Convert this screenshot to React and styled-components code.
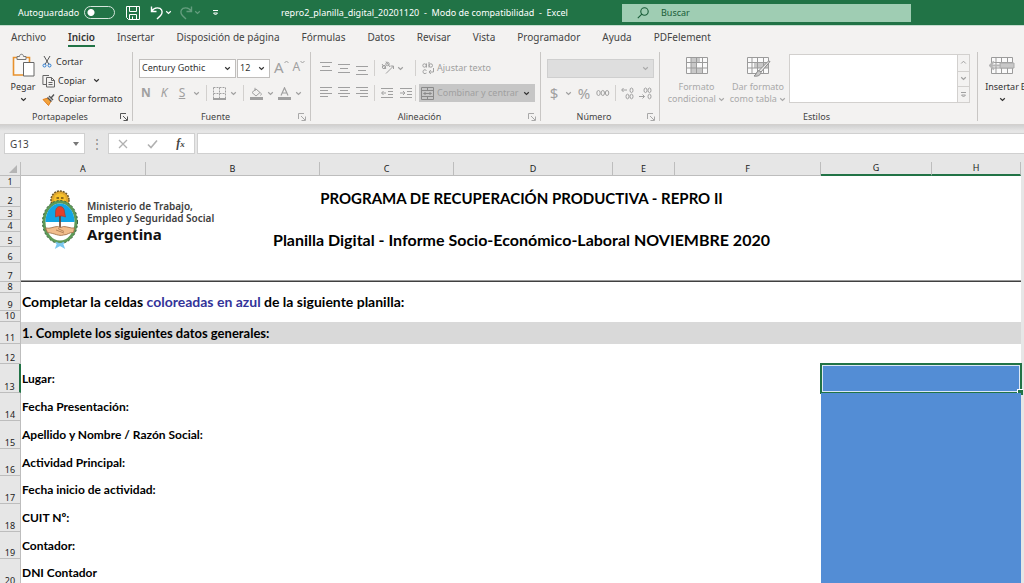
import React from "react";
import styled, { createGlobalStyle, css } from "styled-components";

const GlobalStyle = createGlobalStyle`
  * {
    box-sizing: border-box;
  }
  body {
    margin: 0;
    overflow: hidden;
    background: #e6e6e6;
    font-family: "Segoe UI", "Noto Sans", "Open Sans", sans-serif;
    font-size: 9px;
    line-height: 14px;
    color: #444;
  }
  button, input, select {
    font: inherit;
    color: inherit;
    margin: 0;
    padding: 0;
    border: 0;
    background: none;
    border-radius: 0;
    outline: none;
  }
`;

const Window = styled.div`
  display: flex;
  flex-direction: column;
  height: 100vh;
  overflow: hidden;
`;

/* ---------- title bar ---------- */

const TitleBar = styled.header`
  display: flex;
  align-items: center;
  height: 25px;
  flex: none;
  padding-left: 18px;
  background: #217346;
  color: #fff;
`;

const AutoSave = styled.label`
  display: flex;
  align-items: center;
  gap: 5px;
  width: 108px;
  white-space: nowrap;
`;

const Toggle = styled.input`
  appearance: none;
  width: 31px;
  height: 13px;
  margin: 0;
  border: 1px solid #d5e6dc;
  border-radius: 7px;
  background: radial-gradient(circle at 6px 50%, #fff 3px, transparent 4px);
`;

const QuickAccess = styled.div`
  display: flex;
  align-items: center;
  gap: 3px;
  width: 155px;
`;

const QuickButton = styled.button`
  display: flex;
  align-items: center;
  opacity: ${(p) => (p.disabled ? 0.3 : 1)};
  margin-right: ${(p) => p.$after || 0}px;
`;

const FileName = styled.div`
  width: 341px;
  white-space: pre;
`;

const Search = styled.label`
  display: flex;
  align-items: center;
  gap: 12px;
  flex: 0 1 289px;
  height: 18px;
  padding-left: 15px;
  background: #9fcdb3;
  color: #185c37;

  input {
    flex: 1;
    min-width: 0;
  }
  input::placeholder {
    color: #185c37;
    opacity: 1;
  }
`;

/* ---------- tabs ---------- */

const Tabs = styled.nav`
  display: flex;
  gap: 22px;
  flex: none;
  height: 26px;
  padding: 3px 0 0 11px;
  border-top: 1px solid #c5dccf;
  background: #f3f2f1;
  font-size: 10px;
  line-height: 16px;
`;

const Tab = styled.a`
  height: 18px;
  color: ${(p) => (p.$active ? "#333" : "#444")};
  font-weight: ${(p) => (p.$active ? 600 : 400)};
  border-bottom: 2px solid ${(p) => (p.$active ? "#217346" : "transparent")};
  text-decoration: none;
  white-space: nowrap;
`;

/* ---------- ribbon ---------- */

const Ribbon = styled.section`
  display: flex;
  flex: none;
  height: 74px;
  padding: 1px 0 3px;
  background: #f3f2f1;
  border-bottom: 1px solid #d2d0ce;
`;

const Group = styled.section`
  display: flex;
  flex-direction: column;
  justify-content: space-between;
  flex: ${(p) => (p.$width ? `0 0 ${p.$width}px` : "1 0 auto")};
  border-right: 1px solid #c8c6c4;
`;

const GroupBody = styled.div`
  display: flex;
  height: 56px;
  padding-left: ${(p) => p.$pad || 0}px;
  gap: ${(p) => p.$gap || 0}px;
`;

const GroupFooter = styled.footer`
  display: flex;
  align-items: center;
  height: 8px;
  padding: 0 4px 0 0;

  span {
    flex: 1;
    text-align: center;
  }
`;

const Launcher = styled.button`
  display: flex;
  color: ${(p) => (p.$dim ? "#a8a8a8" : "#555")};
`;

const Stack = styled.div`
  display: flex;
  flex-direction: column;
  gap: ${(p) => p.$gap || 0}px;
  padding-top: ${(p) => p.$top || 0}px;
`;

const Row = styled.div`
  display: flex;
  align-items: center;
  height: ${(p) => p.$height || 20}px;
  gap: ${(p) => p.$gap || 0}px;
`;

const ToolButton = styled.button`
  display: flex;
  align-items: center;
  gap: ${(p) => p.$gap || 2}px;
  height: 18px;
  color: ${(p) => (p.disabled ? "#a0a0a0" : "#333")};
  white-space: nowrap;
`;

const BigButton = styled.button`
  display: flex;
  flex-direction: column;
  align-items: center;
  width: ${(p) => p.$width}px;
  padding-top: ${(p) => p.$top || 3}px;
  line-height: 12px;
  color: ${(p) => (p.disabled ? "#a9a9a9" : "#333")};
  white-space: nowrap;

  > svg:first-child {
    margin-bottom: 4px;
  }
  > svg:last-child {
    margin-top: 4px;
  }
`;

const Letter = styled.span`
  width: 14px;
  font-size: ${(p) => p.$size || 12}px;
  text-align: center;
  ${(p) => p.$kind === "bold" && css`font-weight: 700;`}
  ${(p) => p.$kind === "italic" && css`font-style: italic;`}
  ${(p) => p.$kind === "underline" && css`text-decoration: underline;`}
`;

const SizeButton = styled.button`
  display: flex;
  align-items: flex-start;
  height: 16px;
  padding-left: 3px;
  color: #a0a0a0;
  font-size: ${(p) => p.$size}px;
`;

const Divider = styled.i`
  width: 1px;
  height: 16px;
  margin: 0 ${(p) => p.$space || 0}px;
  background: #d2d0ce;
`;

const SelectBox = styled.div`
  display: flex;
  align-items: center;
  width: ${(p) => p.$width}px;
  height: 19px;
  padding-right: 4px;
  border: 1px solid ${(p) => (p.$dim ? "#cfcfcf" : "#c0bebc")};
  background: ${(p) => (p.$dim ? "#dedede" : "#fff")};
  color: ${(p) => (p.$dim ? "#aaa" : "#333")};

  select {
    appearance: none;
    flex: 1;
    min-width: 0;
    padding-left: 2px;
  }
`;

const MergeButton = styled.button`
  display: flex;
  align-items: center;
  gap: 3px;
  width: 116px;
  height: 18px;
  padding: 0 5px 0 2px;
  background: #c6c6c6;
  color: #a0a0a0;
  white-space: nowrap;

  > svg:last-child {
    margin-left: auto;
  }
`;

const Gallery = styled.div`
  display: flex;
  width: 181px;
  height: 49px;
  margin-top: 2px;
  border: 1px solid #d2d0ce;
  background: #fff;
`;

const GalleryButtons = styled.div`
  display: grid;
  grid-template-rows: repeat(3, 1fr);
  width: 12px;
  margin-left: auto;
  background: #f3f2f1;
  border-left: 1px solid #d2d0ce;

  button {
    display: flex;
    align-items: center;
    justify-content: center;
    color: #a0a0a0;
  }
  button + button {
    border-top: 1px solid #d2d0ce;
  }
`;

/* ---------- formula bar ---------- */

const FormulaBar = styled.div`
  display: flex;
  align-items: center;
  flex: none;
  height: 37px;
  padding: 8px 0 8px 4px;
  background: linear-gradient(#d0d0d0, #e6e6e6 6px);
`;

const NameBox = styled.div`
  display: flex;
  align-items: center;
  width: 81px;
  height: 21px;
  padding: 0 5px;
  border: 1px solid #d0d0d0;
  background: #fff;
  font-size: 10px;

  input {
    flex: 1;
    min-width: 0;
  }
`;

const Dots = styled.div`
  width: 23px;
  text-align: center;
  font-size: 12px;
  color: #888;
`;

const FormulaActions = styled.div`
  display: flex;
  align-items: center;
  justify-content: space-around;
  width: 87px;
  height: 21px;
  margin-right: 2px;
  border: 1px solid #d0d0d0;
  background: #fff;

  button {
    display: flex;
    color: #b0b0b0;
  }
`;

const FxLabel = styled.span`
  color: #444;
  font: italic 700 12px "Liberation Serif", serif;

  small {
    font-size: 9px;
  }
`;

const FormulaInput = styled.input`
  flex: 1;
  min-width: 0;
  height: 21px;
  border: 1px solid #d0d0d0;
  border-right: 0;
  background: #fff;
`;

/* ---------- sheet ---------- */

const SheetArea = styled.main`
  position: relative;
  flex: 1;
  min-height: 0;
  padding-right: 3px;
  overflow: hidden;
`;

const Sheet = styled.table`
  width: 100%;
  table-layout: fixed;
  border-collapse: separate;
  border-spacing: 0;
  color: #000;
`;

const Col = styled.col`
  width: ${(p) => (p.$width ? `${p.$width}px` : "auto")};
`;

const ColHead = styled.th`
  height: 14px;
  padding: 0;
  background: #e6e6e6;
  border-right: 1px solid #bdbdbd;
  border-bottom: ${(p) => (p.$selected ? "2px solid #217346" : "1px solid #bdbdbd")};
  color: #222;
  font-size: 9px;
  font-weight: 400;
  line-height: 12px;
  vertical-align: bottom;
`;

const Corner = styled.td`
  padding: 0;
  border-right: 1px solid #bdbdbd;
  border-bottom: 1px solid #bdbdbd;

  svg {
    display: block;
    margin-left: auto;
    margin-right: 3px;
  }
`;

const RowHead = styled.th`
  height: ${(p) => p.$height}px;
  padding: 0;
  vertical-align: bottom;
  background: #e6e6e6;
  border-right: ${(p) => (p.$selected ? "2px solid #217346" : "1px solid #bdbdbd")};
  border-bottom: 1px solid #bdbdbd;
  color: #222;
  font-size: 9px;
  font-weight: 400;
  line-height: 10px;
`;

const Cell = styled.td`
  padding: 0 0 0 1px;
  background: #fff;
  font-family: "Century Gothic", Lato, sans-serif;
  font-weight: 700;
  font-size: 12px;
  line-height: 10px;
  white-space: nowrap;
  ${(p) => p.$kind === "title" && css`
    font-size: 15px;
    text-align: center;
  `}
  ${(p) => p.$kind === "subtitle" && css`
    font-size: 16px;
    text-align: center;
  `}
  ${(p) => p.$kind === "note" && css`font-size: 14px;`}
  ${(p) => p.$kind === "section" && css`
    font-size: 13px;
    background: #d9d9d9;
  `}
  ${(p) => p.$kind === "rule" && css`
    border-bottom: 1px solid #404040;
    background: linear-gradient(#fff calc(100% - 1px), #9a9a9a 0);
    background-origin: padding-box;
    background-clip: padding-box;
  `}
`;

const InputCell = styled.td`
  position: relative;
  padding: 0;
  background: #538dd5;
`;

const Selection = styled.div`
  position: absolute;
  inset: -1px;
  border: 2px solid #217346;
  box-shadow: inset 0 0 0 1px #dce8f6;

  &::after {
    content: "";
    position: absolute;
    right: -3px;
    bottom: -3px;
    width: 5px;
    height: 5px;
    border: 1px solid #fff;
    border-width: 1px 0 0 1px;
    background: #217346;
  }
`;

const Blue = styled.span`
  color: #333399;
`;

/* the ministry logo floats over the cells */
const Logo = styled.div`
  position: absolute;
  left: 41px;
  top: 27px;
  display: flex;
  gap: 8px;
  white-space: nowrap;
`;

const LogoText = styled.div`
  padding-top: 11px;
  color: #404040;
  font-weight: 600;
  font-size: 10px;
  line-height: 12px;

  strong {
    display: block;
    color: #111;
    font-size: 15px;
    font-weight: 700;
    line-height: 20px;
  }
`;

/* ---------- drawings ---------- */

const Svg = ({ w = 14, h = w, children, ...rest }) => (
  <svg width={w} height={h} viewBox={`0 0 ${w} ${h}`} fill="none" stroke="currentColor" aria-hidden="true" {...rest}>
    {children}
  </svg>
);

const Chevron = () => (
  <Svg w={7} h={5} strokeWidth="1.2">
    <path d="M1.2 1.2 3.5 3.4 5.8 1.2" />
  </Svg>
);

const SaveIcon = () => (
  <Svg w={14}>
    <path d="M.500.500h13v13H2.500l-2-2zM3.500.500v5h7v-5M3.500 13.500v-5h7v5M6.500 10.500v3" />
  </Svg>
);

const UndoIcon = () => (
  <Svg w={16} strokeWidth="1.4">
    <path d="M2.500 1.500v5h5M2.700 6.200C4.500 3.500 8 2 11 3.400c2.800 1.600 2.600 5 .6 7L8 14" />
  </Svg>
);

const RedoIcon = () => (
  <Svg w={16} strokeWidth="1.4">
    <path d="M13.500 1.500v5h-5M13.300 6.200C11.500 3.500 8 2 5 3.400c-2.800 1.600-2.600 5-.6 7L8 14" />
  </Svg>
);

const CustomizeIcon = () => (
  <Svg w={7} h={8}>
    <path d="M1 1.500h5" />
    <path d="M1.500 4h4L3.500 6z" />
  </Svg>
);

const SearchIcon = () => (
  <Svg w={12} strokeWidth="1.1">
    <circle cx="7.500" cy="4.500" r="3.700" />
    <path d="M4.800 7.200.8 11.200" />
  </Svg>
);

const LauncherIcon = () => (
  <Svg w={8}>
    <path d="M.500 6V.500H6M3 3l4 4M7.500 3.500v4h-4" />
  </Svg>
);

const PasteIcon = () => (
  <Svg w={24} h={24}>
    <path d="M2.500 4.500h16v17.500h-16z" fill="#faf9f8" stroke="#e8912d" strokeWidth="1.600" />
    <path d="M6 6.500v-3h2.500c0-3 4-3 4 0H15v3z" fill="#f3f2f1" stroke="#777" />
    <path d="M12.500 9.500h10.500v13.500H12.500z" fill="#fff" stroke="#666" />
  </Svg>
);

const CutIcon = () => (
  <Svg w={10} h={13}>
    <path d="M2 1l5 8.500M8 1 3 9.500" stroke="#555" />
    <circle cx="2.500" cy="10.500" r="1.500" stroke="#2b7cd3" />
    <circle cx="7.500" cy="10.500" r="1.500" stroke="#2b7cd3" />
  </Svg>
);

const CopyIcon = () => (
  <Svg w={14} h={14} stroke="#666">
    <path d="M4 10.500H.900V1.500H7M4.500 3.500h5l3 3v6.500h-8zM9.500 3.500v3h3M6.500 8.500h4M6.500 10.500h4" />
  </Svg>
);

const BrushIcon = () => (
  <Svg w={14} h={13}>
    <path d="M1 6.500l5-1.500 3 3-2.500 4.500z" fill="#f2a33c" stroke="#e07c1c" />
    <path d="M5.500 4.500l4 4M7 3l4 4M9 5l3-3.500" stroke="#555" strokeWidth="1.400" />
  </Svg>
);

const BordersIcon = () => (
  <Svg w={13}>
    <path d="M.500.500h12v11M.500.500v11M6.500.500v11M.500 6.500h12" strokeDasharray="2 1" />
    <path d="M0 12h13" strokeWidth="2" />
  </Svg>
);

const FillIcon = () => (
  <Svg w={13} h={13}>
    <path d="M2 5.500 6 2l4 3.500-4 3.500zM5 4V.800M10.500 5.500c1 1.500 1 2.500 0 3" />
    <path d="M0 11.500h13" strokeWidth="3" />
  </Svg>
);

const FontColorIcon = () => (
  <Svg w={13} h={13}>
    <path d="M3 8.500 6.500.800 10 8.500M4.200 6h4.600" strokeWidth="1.200" />
    <path d="M0 11.500h13" strokeWidth="3" />
  </Svg>
);

// each entry is a list of [from, to] line spans
const lineSets = {
  top: [[0, 12], [2, 10], [0, 12]],
  left: [[0, 12], [0, 8], [0, 12], [0, 8]],
  center: [[0, 12], [2, 10], [0, 12], [2, 10]],
  right: [[0, 12], [4, 12], [0, 12], [4, 12]],
};

const LinesIcon = ({ kind, shift = 0 }) => (
  <Svg w={12} h={14}>
    {lineSets[kind].map(([from, to], i) => (
      <path key={i} d={`M${from} ${1.5 + shift + i * (kind === "top" ? 4 : 3)}H${to}`} />
    ))}
  </Svg>
);

const IndentIcon = ({ back }) => (
  <Svg w={13} h={12}>
    <path d="M0 1.500h12M7 4.500h5M7 7.500h5M0 10.500h12" />
    <path d={back ? "M5 6H.800M2.500 4 .600 6l1.900 2" : "M0 6h4.500M3 4l1.900 2L3 8"} />
  </Svg>
);

const AngleIcon = () => (
  <Svg w={14} h={14}>
    <circle cx="3" cy="6" r="1.700" />
    <circle cx="6.500" cy="3" r="1.700" />
    <path d="M1 3l4 5M5 .500 9 6M5 12.500 12.500 5M9.500 5h3v3" />
  </Svg>
);

const WrapIcon = () => (
  <Svg w={13} h={14}>
    <circle cx="2.500" cy="4.500" r="1.700" />
    <path d="M4.500 2.500v4" />
    <path d="M7 1v5.500" />
    <circle cx="8.800" cy="4.500" r="1.700" />
    <path d="M4.500 9.500C2.500 8 1 9 1 10.700s1.500 2.600 3.500 1.300M11.500 7v4H7M8.800 9 7 11l1.800 2" />
  </Svg>
);

const MergeIcon = () => (
  <Svg w={13} h={13} stroke="#8a8a8a">
    <path d="M.500.500h12v12H.500zM.500 3.500h12M.500 9.500h12M6.500.500v3M6.500 9.500v3M2.500 6.500h8M4.500 5 3 6.500 4.500 8M8.500 5 10 6.500 8.500 8" />
  </Svg>
);

const DecimalIcon = ({ more }) => (
  <Svg w={13} h={13}>
    <ellipse cx="10.500" cy="3.300" rx="1.500" ry="2.300" />
    <ellipse cx="6.500" cy={more ? 9.500 : 3.300} rx="1.500" ry="2.300" />
    <ellipse cx="10.500" cy="9.500" rx="1.500" ry="2.300" />
    <path d={more ? "M6 3H.800M2.500 1 .700 3l1.800 2" : "M0 9.500h5.500M3.500 7.500l2 2-2 2"} />
  </Svg>
);

const TableIcon = ({ kind }) => (
  <Svg w={26} h={22} stroke="#9b9b9b">
    <path d="M2.500 2.500h21v16h-21z" fill="#fafafa" />
    {kind === "conditional" && <path d="M7 3h9v5H7zM7 8h5v5H7zM7 13h11v5H7z" fill="#c8c8c8" stroke="none" />}
    {kind === "format" && <path d="M9 8h14v5H9z" fill="#c8c8c8" stroke="none" />}
    <path d="M2.500 7.500h21M2.500 13h21M7 2.500v16M12.500 2.500v16M18.500 2.500v16" />
    {kind === "format" && (
      <>
        <path d="M25 6.500 16 17l-2-1.500L23.500 6z" fill="#eee" stroke="#888" />
        <path d="M14 15.500l2 2c-1 3.500-4 4-7 3.500 2.500-1 2-4.500 5-5.500z" fill="#c8c8c8" stroke="#888" />
      </>
    )}
    {kind === "insert" && (
      <>
        <path d="M11 8h14v5H11z" fill="#c8c8c8" stroke="#aaa" />
        <path d="M1 10.500h11M5 6.500 1 10.500l4 4" stroke="#b5b5b5" strokeWidth="2" />
      </>
    )}
  </Svg>
);

const Emblem = () => (
  <svg width="38" height="60" viewBox="0 0 38 60" aria-hidden="true">
    <circle cx="19" cy="11" r="9" fill="#e0a72e" stroke="#6b5526" strokeWidth="1.500" strokeDasharray="2 1" />
    <circle cx="19" cy="10.500" r="6" fill="#f6c12c" />
    <path d="M15.500 9h2.500M20 9h2.500M17 13h4" stroke="#6b4d12" strokeWidth="1.300" />
    <ellipse cx="19" cy="33" rx="16" ry="20" fill="#fff" stroke="#5d9a57" strokeWidth="3" />
    <ellipse cx="19" cy="33" rx="17.500" ry="21.500" fill="none" stroke="#355b39" strokeWidth="1" strokeDasharray="2 2" />
    <path d="M4.500 33C4.500 22 11 14.500 19 14.500S33.500 22 33.500 33z" fill="#12a5e4" />
    <path d="M19 27v17" stroke="#6b3a22" strokeWidth="1.600" />
    <path d="M14.500 28v-4c0-5 2-6.500 4.500-6.500s4.500 2 4.500 5.500l1 5c-3-1.500-7-1.500-10 0z" fill="#e3402b" stroke="#a83424" strokeWidth=".600" />
    <path d="M4.500 39c5 1 8-1.500 12-1.500l3 1 3-1c4 0 7 2 11 1.500l-1 4.500c-4-.500-6 2.500-10 2.500-5 1.500-8-1.500-16-2.500z" fill="#f1bd8d" stroke="#9b6a43" strokeWidth=".800" />
    <path d="M15 41l8 3M17 39.500l6 3" stroke="#9b6a43" strokeWidth=".700" />
    <path d="M15 53.500c3 2 5 2 8 0M17 54l-1.500 4 3.500-2 3.500 2-1.500-4" fill="none" stroke="#79c6ef" strokeWidth="1.800" />
  </svg>
);

/* ---------- data ---------- */

const tabs = [
  "Archivo",
  "Inicio",
  "Insertar",
  "Disposición de página",
  "Fórmulas",
  "Datos",
  "Revisar",
  "Vista",
  "Programador",
  "Ayuda",
  "PDFelement",
];

const columns = [
  { name: "A", width: 125 },
  { name: "B", width: 174 },
  { name: "C", width: 134 },
  { name: "D", width: 159 },
  { name: "E", width: 62 },
  { name: "F" },
  { name: "G", width: 111 },
  { name: "H", width: 89 },
];

const rows = [
  { height: 12 },
  { height: 19, kind: "title", text: "PROGRAMA DE RECUPERACIÓN PRODUCTIVA - REPRO II" },
  { height: 13 },
  { height: 12 },
  {
    height: 15,
    kind: "subtitle",
    text: "Planilla Digital - Informe Socio-Económico-Laboral NOVIEMBRE 2020",
  },
  { height: 16 },
  { height: 19, kind: "rule" },
  { height: 11 },
  {
    height: 18,
    kind: "note",
    text: (
      <>
        Completar la celdas <Blue>coloreadas en azul</Blue> de la siguiente planilla:
      </>
    ),
  },
  { height: 11 },
  { height: 22, kind: "section", text: "1. Complete los siguientes datos generales:" },
  { height: 20 },
  { height: 29, text: "Lugar:", field: true },
  { height: 28, text: "Fecha Presentación:", field: true },
  { height: 28, text: "Apellido y Nombre / Razón Social:", field: true },
  { height: 27, text: "Actividad Principal:", field: true },
  { height: 28, text: "Fecha inicio de actividad:", field: true },
  { height: 28, text: "CUIT Nº:", field: true },
  { height: 27, text: "Contador:", field: true },
  { height: 28, text: "DNI Contador", field: true },
];

const SELECTED_ROW = 13;

function RibbonGroup({ title, width, pad, gap, launcher, dim, children }) {
  return (
    <Group $width={width}>
      <GroupBody $pad={pad} $gap={gap}>
        {children}
      </GroupBody>
      <GroupFooter>
        <span>{title}</span>
        {launcher && (
          <Launcher $dim={dim} aria-label={`Opciones de ${title}`}>
            <LauncherIcon />
          </Launcher>
        )}
      </GroupFooter>
    </Group>
  );
}

function Header() {
  return (
    <TitleBar>
      <AutoSave>
        Autoguardado
        <Toggle type="checkbox" />
      </AutoSave>
      <QuickAccess>
        <QuickButton aria-label="Guardar" $after={6}>
          <SaveIcon />
        </QuickButton>
        <QuickButton aria-label="Deshacer" $after={3}>
          <UndoIcon />
          <Chevron />
        </QuickButton>
        <QuickButton aria-label="Rehacer" disabled $after={8}>
          <RedoIcon />
          <Chevron />
        </QuickButton>
        <QuickButton aria-label="Personalizar">
          <CustomizeIcon />
        </QuickButton>
      </QuickAccess>
      <FileName>{"repro2_planilla_digital_20201120  -  Modo de compatibilidad  -  Excel"}</FileName>
      <Search>
        <SearchIcon />
        <input type="search" placeholder="Buscar" aria-label="Buscar" />
      </Search>
    </TitleBar>
  );
}

function Clipboard() {
  return (
    <RibbonGroup title="Portapapeles" width={133} pad={8} gap={4} launcher>
      <BigButton $width={30} $top={1}>
        <PasteIcon />
        Pegar
        <Chevron />
      </BigButton>
      <Stack $gap={1} $top={1}>
        <ToolButton $gap={4}>
          <CutIcon />
          Cortar
        </ToolButton>
        <ToolButton>
          <CopyIcon />
          <Row $gap={7}>
            Copiar
            <Chevron />
          </Row>
        </ToolButton>
        <ToolButton>
          <BrushIcon />
          Copiar formato
        </ToolButton>
      </Stack>
    </RibbonGroup>
  );
}

function FontGroup() {
  return (
    <RibbonGroup title="Fuente" width={178} pad={6} launcher dim>
      <Stack $gap={5} $top={6}>
        <Row $gap={1}>
          <SelectBox $width={97}>
            <select aria-label="Fuente">
              <option>Century Gothic</option>
            </select>
            <Chevron />
          </SelectBox>
          <SelectBox $width={33}>
            <select aria-label="Tamaño de fuente">
              <option>12</option>
            </select>
            <Chevron />
          </SelectBox>
          <SizeButton $size={15} disabled aria-label="Aumentar tamaño">
            A
            <Svg w={5} h={4}>
              <path d="M.500 3 2.500 1l2 2" />
            </Svg>
          </SizeButton>
          <SizeButton $size={12} disabled aria-label="Reducir tamaño">
            A
            <Svg w={5} h={4}>
              <path d="M.500 1l2 2 2-2" />
            </Svg>
          </SizeButton>
        </Row>
        <Row $gap={4}>
          <ToolButton disabled>
            <Letter $kind="bold">N</Letter>
          </ToolButton>
          <ToolButton disabled>
            <Letter $kind="italic">K</Letter>
          </ToolButton>
          <ToolButton disabled $gap={4}>
            <Letter $kind="underline">S</Letter>
            <Chevron />
          </ToolButton>
          <Divider $space={2} />
          <ToolButton disabled $gap={4} aria-label="Bordes">
            <BordersIcon />
            <Chevron />
          </ToolButton>
          <Divider $space={2} />
          <ToolButton disabled $gap={4} aria-label="Color de relleno">
            <FillIcon />
            <Chevron />
          </ToolButton>
          <ToolButton disabled $gap={4} aria-label="Color de fuente">
            <FontColorIcon />
            <Chevron />
          </ToolButton>
        </Row>
      </Stack>
    </RibbonGroup>
  );
}

function AlignGroup() {
  return (
    <RibbonGroup title="Alineación" width={230} pad={9} gap={2} launcher dim>
      <Stack $gap={5} $top={6}>
        <Row $gap={6}>
          <ToolButton disabled aria-label="Alinear arriba">
            <LinesIcon kind="top" />
          </ToolButton>
          <ToolButton disabled aria-label="Alinear en el medio">
            <LinesIcon kind="top" shift={2} />
          </ToolButton>
          <ToolButton disabled aria-label="Alinear abajo">
            <LinesIcon kind="top" shift={4} />
          </ToolButton>
          <Divider />
          <ToolButton disabled aria-label="Orientación">
            <AngleIcon />
            <Chevron />
          </ToolButton>
        </Row>
        <Row $gap={6}>
          <ToolButton disabled aria-label="Alinear a la izquierda">
            <LinesIcon kind="left" />
          </ToolButton>
          <ToolButton disabled aria-label="Centrar">
            <LinesIcon kind="center" />
          </ToolButton>
          <ToolButton disabled aria-label="Alinear a la derecha">
            <LinesIcon kind="right" />
          </ToolButton>
          <Divider />
          <ToolButton disabled aria-label="Disminuir sangría">
            <IndentIcon back />
          </ToolButton>
          <ToolButton disabled aria-label="Aumentar sangría">
            <IndentIcon />
          </ToolButton>
        </Row>
      </Stack>
      <Stack $gap={5} $top={6}>
        <Row $gap={6}>
          <Divider />
          <ToolButton disabled>
            <WrapIcon />
            Ajustar texto
          </ToolButton>
        </Row>
        <Row $gap={3}>
          <Divider />
          <MergeButton>
            <MergeIcon />
            Combinar y centrar
            <Svg w={7} h={5} stroke="#333" strokeWidth="1.2">
              <path d="M1.2 1.2 3.5 3.4 5.8 1.2" />
            </Svg>
          </MergeButton>
        </Row>
      </Stack>
    </RibbonGroup>
  );
}

function NumberGroup() {
  return (
    <RibbonGroup title="Número" width={119} pad={6} launcher dim>
      <Stack $gap={5} $top={6}>
        <Row>
          <SelectBox $width={107} $dim>
            <select disabled aria-label="Formato de número" />
            <Chevron />
          </SelectBox>
        </Row>
        <Row $gap={5}>
          <ToolButton disabled $gap={4}>
            <Letter $size={15}>$</Letter>
            <Chevron />
          </ToolButton>
          <ToolButton disabled>
            <Letter $size={15}>%</Letter>
          </ToolButton>
          <ToolButton disabled aria-label="Estilo millares">
            <Svg w={14} h={8}>
              <ellipse cx="2.500" cy="4" rx="1.700" ry="2.500" />
              <ellipse cx="6.800" cy="4" rx="1.700" ry="2.500" />
              <ellipse cx="11.100" cy="4" rx="1.700" ry="2.500" />
            </Svg>
          </ToolButton>
          <Divider />
          <ToolButton disabled aria-label="Aumentar decimales">
            <DecimalIcon more />
          </ToolButton>
          <ToolButton disabled aria-label="Disminuir decimales">
            <DecimalIcon />
          </ToolButton>
        </Row>
      </Stack>
    </RibbonGroup>
  );
}

function StylesGroup() {
  return (
    <RibbonGroup title="Estilos" width={318} pad={6}>
      <BigButton $width={61} disabled>
        <TableIcon kind="conditional" />
        <span>Formato</span>
        <span>
          condicional <Chevron />
        </span>
      </BigButton>
      <BigButton $width={62} disabled>
        <TableIcon kind="format" />
        <span>Dar formato</span>
        <span>
          como tabla <Chevron />
        </span>
      </BigButton>
      <Gallery>
        <GalleryButtons>
          <button aria-label="Anterior">
            <Svg w={7} h={5}>
              <path d="M1.200 3.500 3.500 1.200 5.800 3.500" />
            </Svg>
          </button>
          <button aria-label="Siguiente">
            <Chevron />
          </button>
          <button aria-label="Más estilos">
            <CustomizeIcon />
          </button>
        </GalleryButtons>
      </Gallery>
    </RibbonGroup>
  );
}

function SheetView() {
  return (
    <SheetArea>
      <Sheet>
        <colgroup>
          <Col $width={21} />
          {columns.map((c) => (
            <Col key={c.name} $width={c.width} />
          ))}
        </colgroup>
        <thead>
          <tr>
            <Corner>
              <Svg w={8} stroke="none">
                <path d="M8 0v8H0z" fill="#b5b5b5" />
              </Svg>
            </Corner>
            {columns.map((c) => (
              <ColHead key={c.name} $selected={c.name === "G" || c.name === "H"}>
                {c.name}
              </ColHead>
            ))}
          </tr>
        </thead>
        <tbody>
          {rows.map((row, i) => (
            <tr key={i}>
              <RowHead scope="row" $height={row.height} $selected={i + 1 === SELECTED_ROW}>
                {i + 1}
              </RowHead>
              <Cell colSpan={row.field ? 6 : 8} $kind={row.kind}>
                {row.text}
              </Cell>
              {row.field && (
                <InputCell colSpan={2}>{i + 1 === SELECTED_ROW && <Selection />}</InputCell>
              )}
            </tr>
          ))}
        </tbody>
      </Sheet>
      <Logo>
        <Emblem />
        <LogoText>
          Ministerio de Trabajo,
          <br />
          Empleo y Seguridad Social
          <strong>Argentina</strong>
        </LogoText>
      </Logo>
    </SheetArea>
  );
}

function App() {
  return (
    <Window>
      <GlobalStyle />
      <Header />
      <Tabs>
        {tabs.map((tab) => (
          <Tab key={tab} href="#" $active={tab === "Inicio"}>
            {tab}
          </Tab>
        ))}
      </Tabs>
      <Ribbon>
        <Clipboard />
        <FontGroup />
        <AlignGroup />
        <NumberGroup />
        <StylesGroup />
        <RibbonGroup title="" pad={6}>
          <BigButton $width={36}>
            <TableIcon kind="insert" />
            Insertar
            <Chevron />
          </BigButton>
          <BigButton $width={36}>
            <TableIcon />
            Eliminar
            <Chevron />
          </BigButton>
        </RibbonGroup>
      </Ribbon>
      <FormulaBar>
        <NameBox>
          <input defaultValue="G13" aria-label="Cuadro de nombres" />
          <Svg w={6} h={4} stroke="none">
            <path d="M0 0h6L3 4z" fill="#777" />
          </Svg>
        </NameBox>
        <Dots>⋮</Dots>
        <FormulaActions>
          <button aria-label="Cancelar">
            <Svg w={10} strokeWidth="1.300">
              <path d="M1 1l8 8M9 1 1 9" />
            </Svg>
          </button>
          <button aria-label="Introducir">
            <Svg w={11} h={10} strokeWidth="1.600">
              <path d="M1 5.500 4 8.500 10 1.500" />
            </Svg>
          </button>
          <button aria-label="Insertar función">
            <FxLabel>
              f<small>x</small>
            </FxLabel>
          </button>
        </FormulaActions>
        <FormulaInput aria-label="Barra de fórmulas" />
      </FormulaBar>
      <SheetView />
    </Window>
  );
}

export default App;
